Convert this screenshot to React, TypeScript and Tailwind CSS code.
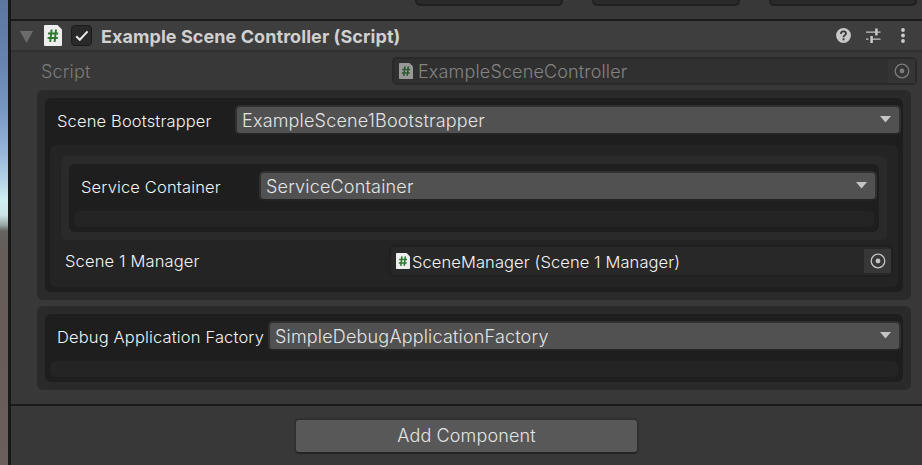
import type { ReactNode } from "react";

function ScriptIcon({ className }: { className: string }) {
  return (
    <svg viewBox="0 0 18 21" className={className} preserveAspectRatio="none">
      <path d="M1 0H13.5L18 4.5V20a1 1 0 0 1-1 1H1a1 1 0 0 1-1-1V1a1 1 0 0 1 1-1Z" fill="#eeeeee" />
      <path d="M7.6 4.5 6.2 17M12 4.5 10.6 17M4 8.5H14.2M3.6 13H13.8" stroke="#2d7a32" strokeWidth="2" fill="none" />
    </svg>
  );
}

function PickerIcon({ color }: { color: string }) {
  return (
    <svg viewBox="0 0 16 16" className="size-4 shrink-0">
      <circle cx="8" cy="8" r="6.8" fill="none" stroke={color} strokeWidth="1.3" />
      <circle cx="8" cy="8" r="2.4" fill={color} />
    </svg>
  );
}

function Dropdown({ children }: { children: ReactNode }) {
  return (
    <div className="flex h-[30px] min-w-0 flex-1 items-center justify-between rounded-[5px] border-2 border-[#303030] border-b-[#242424] bg-[#515151] pr-[8.5px] pl-[5px]">
      <span className="pt-[2px] text-[18px] leading-[26px] font-[350] tracking-[0.18px] whitespace-nowrap text-[#e4e4e4]">{children}</span>
      <svg viewBox="0 0 11 7" className="mb-[2px] h-[7px] w-[11px]">
        <path d="M0 0H11L5.5 6.6Z" fill="#c4c4c4" />
      </svg>
    </div>
  );
}

function ReferenceBox({
  label,
  labelClass,
  value,
  className,
  children,
}: {
  label: string;
  labelClass: string;
  value: string;
  className: string;
  children?: ReactNode;
}) {
  return (
    <div className={`rounded-[6px] bg-[#2a2a2a] p-2 ${className}`}>
      <div className="flex h-full flex-col rounded-[6px] bg-[#1e1e1e] px-[5px] pb-[5px]">
        <div className="-mr-[3px] flex pt-[7px] pl-[7px]">
          <span className={`h-[30px] shrink-0 pt-[3px] text-[16.5px] leading-[26px] font-[350] tracking-[0.15px] whitespace-nowrap text-[#f4f4f4] ${labelClass}`}>{label}</span>
          <Dropdown>{value}</Dropdown>
        </div>
        <div className="mt-[10px] flex-1 rounded-[6px] bg-[#242424]">{children}</div>
      </div>
    </div>
  );
}

export default function App() {
  return (
    <div className="flex h-[465px] w-[922px] overflow-hidden bg-[#383838] font-['Inter',sans-serif]">
      <div className="w-2 shrink-0 bg-[linear-gradient(180deg,#5b769f_0px,#6683af_60px,#7898c4_110px,#99b8dc_155px,#b4d3e7_180px,#cef0f2_200px,#cbe3e5_215px,#99a7a6_225px,#656361_231px,#655d58_250px,#685c57_350px,#6a5f59_465px)]" />
      <div className="w-[3px] shrink-0 bg-[#191919]" />
      <main className="flex min-w-0 flex-1 flex-col">
        <div className="flex h-[19px] shrink-0 gap-[29px] pl-[404px]">
          <div className="h-[6px] w-[148px] rounded-b-[5px] border-2 border-t-0 border-[#202020] bg-[#2a2a2a]" />
          <div className="h-[6px] w-[148px] rounded-b-[5px] border-2 border-t-0 border-[#202020] bg-[#2a2a2a]" />
          <div className="h-[6px] w-[148px] rounded-b-[5px] border-2 border-t-0 border-[#202020] bg-[#2a2a2a]" />
        </div>
        <header className="flex h-[33px] shrink-0 items-center border-t-2 border-b-2 border-t-[#1a1a1a] border-b-[#303030] bg-[#3e3e3e] pr-[17px] pl-[9px]">
          <svg viewBox="0 0 13 12" className="mt-[2px] h-3 w-[13px]">
            <path d="M0 0H13L6.5 12Z" fill="#6c6c6c" />
          </svg>
          <ScriptIcon className="ml-[11px] h-[21px] w-[18px]" />
          <div className="ml-[9px] flex size-[21px] items-center justify-center rounded-[4px] border border-[#1b1b1b] bg-[#292929]">
            <svg viewBox="0 0 14 12" className="h-3 w-[14px]">
              <path d="M1.2 6.2 4.8 9.8 12.6 1.4" fill="none" stroke="#e8e8e8" strokeWidth="2" />
            </svg>
          </div>
          <h1 className="ml-[9px] pt-[2px] text-[18px] leading-[26px] font-bold tracking-[0.07px] whitespace-nowrap text-[#d0d0d0]">Example Scene Controller (Script)</h1>
          <div className="ml-auto flex items-center">
            <svg viewBox="0 0 15 15" className="size-[15px]">
              <circle cx="7.5" cy="7.5" r="7.4" fill="#c8c8c8" />
              <path d="M5 5.9C5 4.1 6 3.3 7.5 3.3S10 4.1 10 5.4C10 7.2 7.5 7 7.5 9.2" fill="none" stroke="#333333" strokeWidth="1.7" />
              <rect x="6.6" y="10.4" width="1.9" height="1.9" fill="#333333" />
            </svg>
            <svg viewBox="0 0 15 15" className="ml-[15px] size-[15px]">
              <path d="M0 4.2H9.5M11 4.2H14.5M0 11.2H2.5M5 11.2H14.5" stroke="#c4c4c4" strokeWidth="1.3" />
              <path d="M10.4 0.5V7.5M5.6 8V15" stroke="#c8c8c8" strokeWidth="2.5" />
            </svg>
            <svg viewBox="0 0 4 15" className="ml-[20px] h-[15px] w-1">
              <circle cx="2" cy="2" r="1.9" fill="#cccccc" />
              <circle cx="2" cy="7.5" r="1.9" fill="#cccccc" />
              <circle cx="2" cy="13" r="1.9" fill="#cccccc" />
            </svg>
          </div>
        </header>
        <div className="flex h-[38px] shrink-0 pt-[5px] pl-[30px]">
          <span className="w-[351px] pt-[2px] text-[18px] leading-[26px] font-[350] tracking-[0.15px] text-[#7b7b7b]">Script</span>
          <div className="flex h-[28px] w-[525px] shrink-0 items-center rounded-[5px] border-2 border-[#292929] bg-[#303030] pl-[5px]">
            <ScriptIcon className="h-[16px] w-[14px] opacity-55" />
            <span className="ml-[5px] pt-[2px] text-[18px] leading-[24px] font-[350] tracking-[0.15px] text-[#838383]">ExampleSceneController</span>
            <div className="ml-auto flex h-full w-[27px] items-center justify-center bg-[#343434]">
              <PickerIcon color="#7c7c7c" />
            </div>
          </div>
        </div>
        <ReferenceBox label="Scene Bootstrapper" labelClass="w-[178px]" value="ExampleScene1Bootstrapper" className="ml-[26px] h-[210px] w-[874px] shrink-0">
          <div className="pt-[11px] pl-[11px]">
            <ReferenceBox label="Service Container" labelClass="w-[178px]" value="ServiceContainer" className="h-[84px] w-[826px]" />
          </div>
          <div className="flex pt-[5px] pl-[15px]">
            <span className="w-[324px] pt-[3px] text-[16.5px] leading-[26px] font-[350] tracking-[0.15px] text-[#f4f4f4]">Scene 1 Manager</span>
            <div className="flex h-[32px] w-[504px] shrink-0 items-center rounded-[5px] border-2 border-[#202020] bg-[#282828] pl-[5px]">
              <ScriptIcon className="h-[16px] w-[14px]" />
              <span className="ml-[2px] pt-[3px] text-[16.5px] leading-[25px] font-[350] tracking-[0.1px] whitespace-nowrap text-[#f4f4f4]">SceneManager (Scene 1 Manager)</span>
              <div className="ml-auto flex h-[24px] w-[27px] items-center justify-center bg-[#373737]">
                <PickerIcon color="#c4c4c4" />
              </div>
            </div>
          </div>
        </ReferenceBox>
        <ReferenceBox label="Debug Application Factory" labelClass="w-[211px]" value="SimpleDebugApplicationFactory" className="mt-[6px] ml-[26px] h-[84px] w-[874px] shrink-0" />
        <footer className="mt-[14px] flex flex-1 border-t-2 border-[#1a1a1a] pt-[12px] pl-[283px]">
          <button className="h-[36px] w-[345px] rounded-[5px] border-2 border-[#303030] border-b-[#242424] bg-[#585858] text-[18px] leading-[30px] font-[350] tracking-[0.12px] text-[#e4e4e4]">Add Component</button>
        </footer>
      </main>
    </div>
  );
}
